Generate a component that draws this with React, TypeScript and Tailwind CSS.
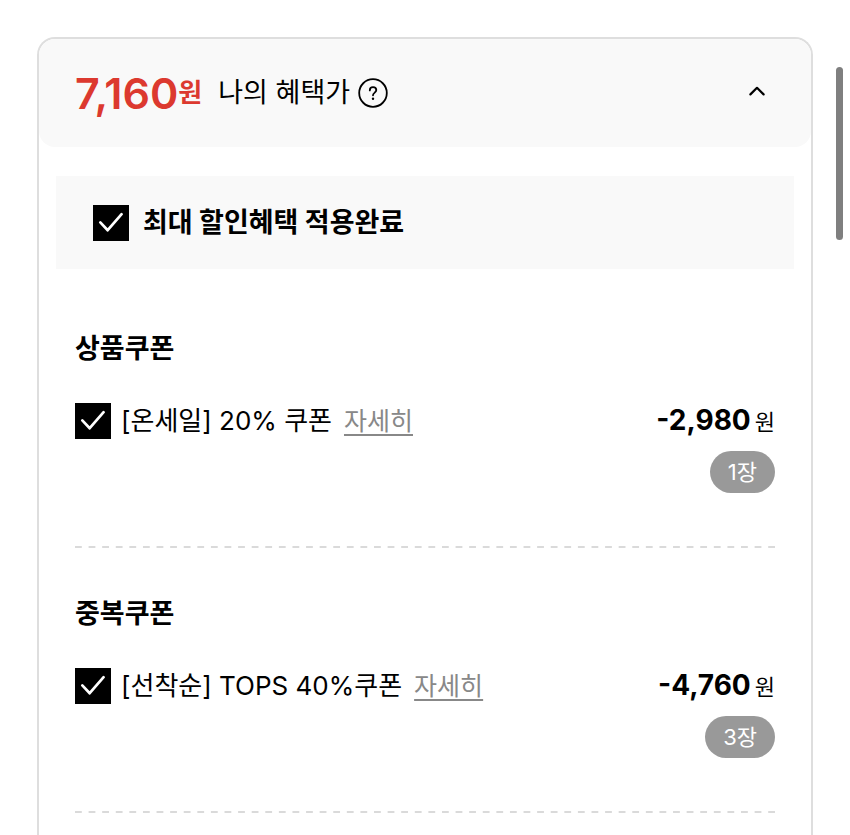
import { useState } from "react";

type Coupon = {
  id: string;
  category: string;
  name: string;
  discount: string;
  count: number;
};

const coupons: Coupon[] = [
  {
    id: "product",
    category: "상품쿠폰",
    name: "[온세일] 20% 쿠폰",
    discount: "-2,980",
    count: 1,
  },
  {
    id: "duplicate",
    category: "중복쿠폰",
    name: "[선착순] TOPS 40%쿠폰",
    discount: "-4,760",
    count: 3,
  },
];

const CheckBox = ({ id }: { id: string }) => (
  <span className="grid size-9 shrink-0">
    <input
      type="checkbox"
      id={id}
      defaultChecked
      className="peer col-start-1 row-start-1 size-9 appearance-none border-2 border-black bg-white checked:bg-black"
    />
    <svg
      viewBox="0 0 36 36"
      fill="none"
      stroke="white"
      strokeWidth="2.7"
      strokeLinecap="round"
      strokeLinejoin="round"
      className="pointer-events-none invisible col-start-1 row-start-1 size-9 peer-checked:visible"
    >
      <path d="M7.3 17.4 14.7 25.2 28.6 9.2" />
    </svg>
  </span>
);

const DashedLine = () => (
  <svg className="block h-[2px] w-full" aria-hidden="true">
    <line
      x1="0"
      y1="1"
      x2="100%"
      y2="1"
      pathLength={103}
      strokeDasharray="1 1"
      stroke="#dadada"
      strokeWidth="2"
    />
  </svg>
);

const CouponSection = ({ coupon }: { coupon: Coupon }) => (
  <section>
    <h2 className="text-[27px] leading-9 font-bold">{coupon.category}</h2>
    <div className="mt-9 flex h-9 items-center">
      <CheckBox id={coupon.id} />
      <label htmlFor={coupon.id} className="ml-2.5 text-[26px] leading-9">
        {coupon.name}
      </label>
      <a
        href="#detail"
        className="ml-3 text-[25px] leading-9 text-[#888] underline decoration-2 underline-offset-4"
      >
        자세히
      </a>
      <p className="ml-auto flex items-baseline gap-1 leading-9">
        <span className="text-[28px] font-bold">{coupon.discount}</span>
        <span className="text-[22px]">원</span>
      </p>
    </div>
    <div className="mt-3 mb-[53px] flex justify-end">
      <span className="rounded-full bg-[#999] px-[18px] text-[22px] leading-[42px] text-white">
        {coupon.count}장
      </span>
    </div>
    <DashedLine />
  </section>
);

const App = () => {
  const [open, setOpen] = useState(true);

  return (
    <main className="relative flex min-h-screen flex-col bg-white px-[37px] pt-[37px] font-['Inter','Noto_Sans_CJK_KR',sans-serif] text-black">
      <div className="flex-1 rounded-t-[18px] border-2 border-b-0 border-[#dedede]">
        {/* Benefit price */}
        <header className="flex h-[108px] items-center rounded-[16px] bg-[#f9f9f9] px-9">
          <p className="flex items-center text-[#dc392f]">
            <strong className="text-[43px] leading-none font-semibold">
              7,160
            </strong>
            <span className="text-[26px] leading-9 font-semibold">원</span>
          </p>
          <span className="ml-4 text-[27px] leading-9">나의 혜택가</span>
          <button type="button" aria-label="혜택가 안내" className="ml-2">
            <svg
              viewBox="0 0 30 30"
              fill="none"
              stroke="currentColor"
              strokeWidth="1.8"
              strokeLinecap="round"
              strokeLinejoin="round"
              className="size-[30px]"
            >
              <circle cx="15" cy="15" r="13.8" />
              <path d="M11.8 12.4c0-2 1.4-3.3 3.2-3.3s3.3 1.2 3.3 3c0 2.5-3.3 2.5-3.3 5.2" />
              <circle cx="15" cy="20.8" r="1.2" fill="currentColor" stroke="none" />
            </svg>
          </button>
          <button
            type="button"
            aria-label="혜택 접기"
            aria-expanded={open}
            onClick={() => setOpen(!open)}
            className="ml-auto"
          >
            <svg
              viewBox="0 0 36 36"
              fill="none"
              stroke="currentColor"
              strokeWidth="2.2"
              strokeLinecap="round"
              strokeLinejoin="round"
              className="size-9"
            >
              <path d="m11.4 19.4 6.6-6.6 6.6 6.6" />
            </svg>
          </button>
        </header>

        {open && (
          <>
            {/* Max discount */}
            <div className="mx-[17px] mt-[29px] flex h-[93px] items-center bg-[#f9f9f9] px-[37px]">
              <CheckBox id="max-discount" />
              <label
                htmlFor="max-discount"
                className="ml-3.5 text-[27px] leading-9 font-bold"
              >
                최대 할인혜택 적용완료
              </label>
            </div>

            <div className="flex flex-col gap-12 px-9 pt-[62px]">
              {coupons.map((coupon) => (
                <CouponSection key={coupon.id} coupon={coupon} />
              ))}
            </div>
          </>
        )}
      </div>

      {/* Scroll indicator */}
      <div className="absolute top-[67px] right-[7px] h-[173px] w-[7px] rounded-full bg-[#7f7f7f]"></div>
    </main>
  );
};

export default App;
